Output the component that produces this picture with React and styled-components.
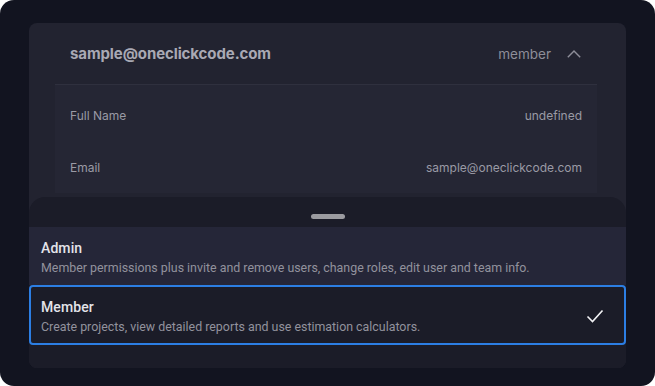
import React from "react";
import styled, { createGlobalStyle } from "styled-components";

const Global = createGlobalStyle`
  html, body { margin: 0; padding: 0; background: #ffffff; }
  body { font-family: Inter, "Noto Sans", sans-serif; }
`;

const Frame = styled.div`
  width: 655px;
  height: 386px;
  box-sizing: border-box;
  background: #121420;
  border-radius: 14px;
  padding: 23px 29px 18px 29px;
`;

const Card = styled.div`
  position: relative;
  height: 100%;
  background: #222330;
  border-radius: 8px;
  overflow: hidden;
`;

const Header = styled.div`
  display: flex;
  align-items: center;
  height: 61px;
  padding: 0 45px 0 41px;
`;

const HeaderTitle = styled.div`
  flex: 1;
  font-family: Inter, sans-serif;
  font-weight: 700;
  font-size: 15px;
  color: #a9a9b4;
  letter-spacing: -0.1px;
`;

const Role = styled.span`
  font-family: Inter, sans-serif;
  font-size: 13.5px;
  color: #8e8e99;
  margin-right: 16px;
`;

const Details = styled.div`
  margin: 0 29px 0 26px;
  background: #252634;
  border-top: 1px solid #2f303e;
  padding: 4px 15px 0;
`;

const DetailRow = styled.div`
  display: flex;
  justify-content: space-between;
  align-items: center;
  height: 52px;
  font-family: Inter, sans-serif;
  font-size: 12px;
  color: #9a9aa5;
`;

const Sheet = styled.div`
  position: absolute;
  left: 0;
  right: 0;
  bottom: 0;
  height: 171px;
  background: #1b1c28;
  border-radius: 16px 16px 0 0;
  display: flex;
  flex-direction: column;
`;

const HandleBar = styled.div`
  height: 30px;
  display: flex;
  justify-content: center;
  padding-top: 17px;
  box-sizing: border-box;
`;

const Handle = styled.div`
  width: 34px;
  height: 5px;
  border-radius: 3px;
  background: #9b9ba0;
`;

const Option = styled.div`
  display: flex;
  align-items: center;
  box-sizing: border-box;
  height: ${(p) => (p.$selected ? "60px" : "58px")};
  padding: 2px ${(p) => (p.$selected ? "20px" : "12px")} 0 ${(p) => (p.$selected ? "10px" : "12px")};
  background: ${(p) => (p.$selected ? "#1b1c28" : "#252638")};
  border: ${(p) => (p.$selected ? "2px solid #2c7ee3" : "none")};
  border-radius: ${(p) => (p.$selected ? "4px" : "0")};
`;

const OptionText = styled.div`
  flex: 1;
  display: flex;
  flex-direction: column;
  gap: 4px;
`;

const OptionTitle = styled.div`
  font-family: Roboto, sans-serif;
  font-weight: 500;
  font-size: 14px;
  color: #e4e4ea;
  letter-spacing: 0.1px;
`;

const OptionDesc = styled.div`
  font-family: Roboto, sans-serif;
  font-size: 12.4px;
  color: #92929d;
`;

const Chevron = () => (
  <svg width="14" height="9" viewBox="0 0 14 9" fill="none">
    <path d="M0.8 8.3 L7 2 L13.2 8.3" stroke="#8e8e99" strokeWidth="1.4" />
  </svg>
);

const Check = () => (
  <svg width="18" height="14" viewBox="0 0 18 14" fill="none">
    <path d="M1.5 7.5 L6.5 12.5 L16.5 1.5" stroke="#f2f2f5" strokeWidth="1.6" />
  </svg>
);

export default function App() {
  return (
    <>
      <Global />
      <Frame>
        <Card>
          <Header>
            <HeaderTitle>sample@oneclickcode.com</HeaderTitle>
            <Role>member</Role>
            <Chevron />
          </Header>
          <Details>
            <DetailRow>
              <span>Full Name</span>
              <span>undefined</span>
            </DetailRow>
            <DetailRow>
              <span>Email</span>
              <span>sample@oneclickcode.com</span>
            </DetailRow>
          </Details>
          <Sheet>
            <HandleBar>
              <Handle />
            </HandleBar>
            <Option>
              <OptionText>
                <OptionTitle>Admin</OptionTitle>
                <OptionDesc>
                  Member permissions plus invite and remove users, change roles, edit user and team info.
                </OptionDesc>
              </OptionText>
            </Option>
            <Option $selected>
              <OptionText>
                <OptionTitle>Member</OptionTitle>
                <OptionDesc>
                  Create projects, view detailed reports and use estimation calculators.
                </OptionDesc>
              </OptionText>
              <Check />
            </Option>
          </Sheet>
        </Card>
      </Frame>
    </>
  );
}
